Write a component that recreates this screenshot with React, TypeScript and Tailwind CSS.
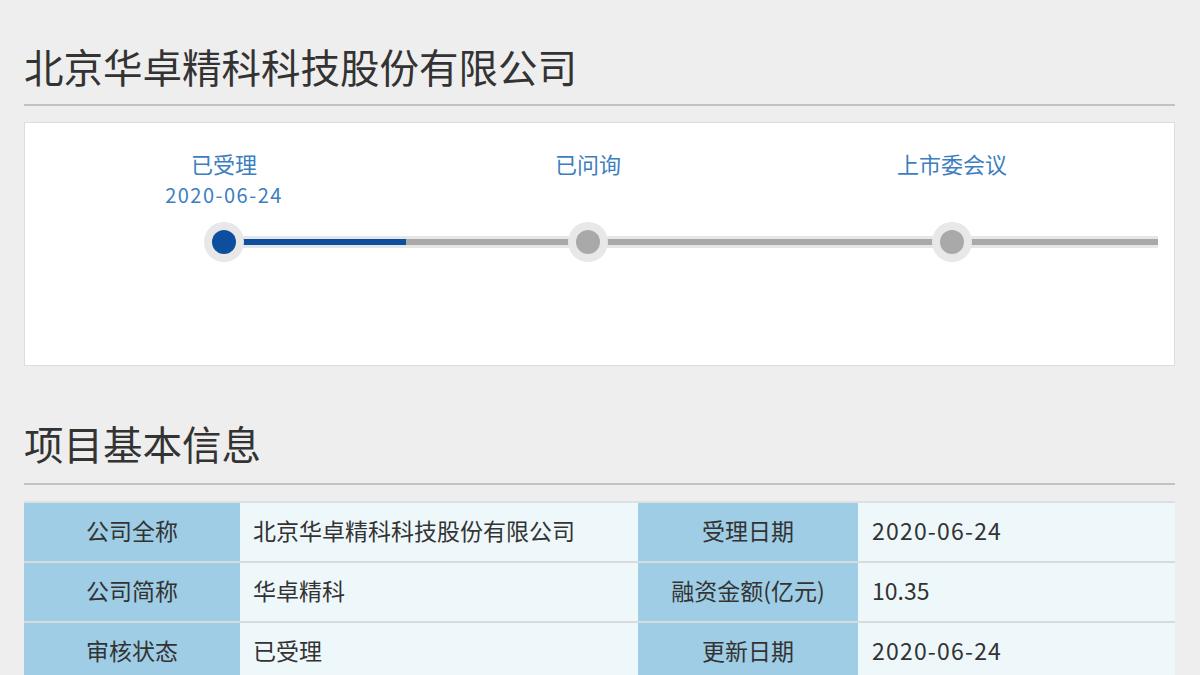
import React from "react";

const font = { fontFamily: '"Noto Sans CJK SC", "Noto Sans", sans-serif' };

type Step = { label: string; date?: string; done?: boolean };

const steps: Step[] = [
  { label: "已受理", date: "2020-06-24", done: true },
  { label: "已问询" },
  { label: "上市委会议" },
];

const rows: [string, string, string, string][] = [
  ["公司全称", "北京华卓精科科技股份有限公司", "受理日期", "2020-06-24"],
  ["公司简称", "华卓精科", "融资金额(亿元)", "10.35"],
  ["审核状态", "已受理", "更新日期", "2020-06-24"],
];

const isDate = (v: string) => /^\d{4}-\d{2}-\d{2}$/.test(v);

function Node({ done }: { done?: boolean }) {
  return (
    <div className="relative z-10 flex h-10 w-10 items-center justify-center rounded-full bg-[#e8e8e8]">
      <div className={done ? "h-6 w-6 rounded-full bg-[#0b4f9e]" : "h-6 w-6 rounded-full bg-[#a9a9a9]"} />
    </div>
  );
}

function Progress() {
  return (
    <div className="h-[244px] border border-[#dcdcdc] bg-white pl-[17px] pt-[25px]">
      <div className="grid w-[1092px] grid-cols-3">
        {steps.map((s) => (
          <div key={s.label} className="flex h-[62px] flex-col items-center text-[#3c7ebf]">
            <div className="text-[22px] leading-[30px]">{s.label}</div>
            {s.date && <div className="mt-[2px] text-[20px] leading-[30px] tracking-[1.5px]">{s.date}</div>}
          </div>
        ))}
      </div>
      <div className="relative mt-3 h-10 w-[1116px]">
        {/* track */}
        <div className="absolute left-[182px] right-0 top-[14px] h-3 bg-[#e6e6e6]" />
        <div className="absolute left-[182px] right-0 top-[17px] h-[6px] bg-[#a9a9a9]" />
        <div className="absolute left-[182px] top-[17px] h-[6px] w-[182px] bg-[#0b4f9e]" />
        <div className="grid w-[1092px] grid-cols-3">
          {steps.map((s) => (
            <div key={s.label} className="flex justify-center">
              <Node done={s.done} />
            </div>
          ))}
        </div>
      </div>
    </div>
  );
}

function InfoTable() {
  return (
    <div className="border-t-2 border-[#dde0e2]">
      {rows.map((r) => (
        <div
          key={r[0]}
          className="grid h-[60px] grid-cols-[216px_398px_220px_317px] border-b-2 border-[#d6dbde] text-[23px] text-[#333]"
        >
          <div className="flex items-center justify-center bg-[#9ecde5] pb-1">{r[0]}</div>
          <div className="flex items-center bg-[#eef8fb] pb-1 pl-[13px]">{r[1]}</div>
          <div className="flex items-center justify-center bg-[#9ecde5] pb-1">{r[2]}</div>
          <div className={isDate(r[3]) ? "flex items-center bg-[#eef8fb] pb-1 pl-[14px] tracking-[1.2px]" : "flex items-center bg-[#eef8fb] pb-1 pl-[14px]"}>
            {r[3]}
          </div>
        </div>
      ))}
    </div>
  );
}

export default function App() {
  return (
    <div style={font} className="h-[675px] w-[1200px] overflow-hidden bg-[#eeeeee] pl-6 pr-[25px]">
      <h1 className="pt-[42px] text-[39.5px] leading-[47px] text-[#333]">北京华卓精科科技股份有限公司</h1>
      <div className="mt-[15px] h-[2px] bg-[#c2c2c2]" />
      <div className="mt-4">
        <Progress />
      </div>
      <h2 className="mt-[53px] text-[39.5px] leading-[47px] text-[#333]">项目基本信息</h2>
      <div className="mt-[17px] h-[2px] bg-[#c2c2c2]" />
      <div className="mt-4">
        <InfoTable />
      </div>
    </div>
  );
}
